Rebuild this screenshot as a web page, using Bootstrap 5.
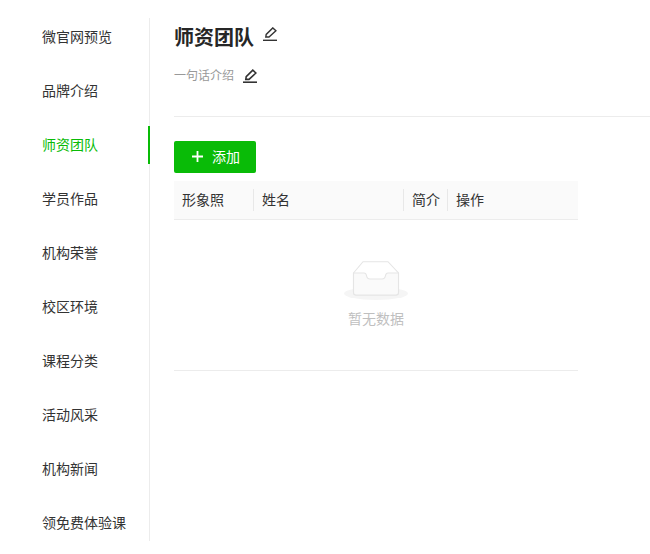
<!DOCTYPE html>
<html lang="zh">
<head>
<meta charset="utf-8">
<title>师资团队</title>
<link href="https://cdn.jsdelivr.net/npm/bootstrap@5.3.0/dist/css/bootstrap.min.css" rel="stylesheet">
<style>
html,body{height:100%;overflow:hidden}
body{background:#fff;color:#262626;font-family:"Noto Sans CJK SC","Liberation Sans",sans-serif;font-size:14px;line-height:1.5}
.page-wrap{padding-top:18px;width:650px}
.side-menu{width:150px;height:523px;border-right:1px solid #ececec;flex:none}
.side-item{display:flex;align-items:center;height:38px;margin-bottom:16px;padding-left:42px;padding-bottom:2px;color:#333;font-size:14px;text-decoration:none;margin-right:-1px}
.side-item.on{color:#09bb07;border-right:2px solid #09bb07}
.main-pane{padding-left:24px;flex:1;min-width:0}
.title-row{height:38px;gap:9px}
.title-txt{font-size:20px;font-weight:700;color:#262626;line-height:38px}
.title-pen{margin-bottom:6px}
.sub-row{height:38px;margin-top:1px;gap:9px;color:#999;font-size:12px}
.sub-txt{padding-bottom:2px}
.sep{height:1px;background:#ececec;margin-top:21px;margin-bottom:24px}
.add-btn{width:82px;height:32px;background:#09bb07;border:0;border-radius:2px;color:#fff;font-size:14px;padding:0 0 2px 2px;gap:9px}
.add-btn:hover{background:#09bb07;color:#fff}
.grid-head{width:404px;height:39px;margin-top:8px;background:#fafafa;border-bottom:1px solid #ececec;font-size:14px;color:#333}
.cell{height:100%;display:flex;align-items:center;padding-left:8px;padding-bottom:2px;position:relative}
.cell+.cell::before{content:"";position:absolute;left:-1px;top:8px;height:22px;width:1px;background:#e8e8e8}
.cw1{width:80px}.cw2{width:150px}.cw3{width:44px}.cw4{flex:1}
.empty-box{width:404px;height:151px;border-bottom:1px solid #ececec;padding-top:41px}
.empty-txt{color:#bfbfbf;font-size:14px;line-height:20px;margin-top:6px}
</style>
</head>
<body>
<div class="page-wrap d-flex">
  <nav class="side-menu">
    <a class="side-item" href="#">微官网预览</a>
    <a class="side-item" href="#">品牌介绍</a>
    <a class="side-item on" href="#">师资团队</a>
    <a class="side-item" href="#">学员作品</a>
    <a class="side-item" href="#">机构荣誉</a>
    <a class="side-item" href="#">校区环境</a>
    <a class="side-item" href="#">课程分类</a>
    <a class="side-item" href="#">活动风采</a>
    <a class="side-item" href="#">机构新闻</a>
    <a class="side-item" href="#">领免费体验课</a>
  </nav>
  <main class="main-pane">
    <div class="title-row d-flex align-items-center">
      <span class="title-txt">师资团队</span>
      <svg class="title-pen" width="14" height="14" viewBox="0 0 14 14" fill="none" stroke="#333" stroke-width="1.4"><path d="M2.8 10 L3.2 7.4 L9.8 0.9 L12.9 3.8 L6 10 Z"/><path d="M0 13.3H14"/></svg>
    </div>
    <div class="sub-row d-flex align-items-center">
      <span class="sub-txt">一句话介绍</span>
      <svg width="14" height="14" viewBox="0 0 14 14" fill="none" stroke="#333" stroke-width="1.6"><path d="M2.8 10.4 L3.2 7.6 L9.8 1.1 L12.9 4 L6 10.4 Z"/><path d="M0 13.2H14"/></svg>
    </div>
    <div class="sep"></div>
    <button type="button" class="btn add-btn d-flex align-items-center justify-content-center">
      <svg width="11" height="11" viewBox="0 0 11 11" fill="#fff"><path d="M4.6 0h1.8v4.6H11v1.8H6.4V11H4.6V6.4H0V4.6h4.6z"/></svg>
      <span>添加</span>
    </button>
    <div class="grid-head d-flex">
      <div class="cell cw1">形象照</div>
      <div class="cell cw2">姓名</div>
      <div class="cell cw3">简介</div>
      <div class="cell cw4">操作</div>
    </div>
    <div class="empty-box d-flex flex-column align-items-center">
      <svg width="64" height="41" viewBox="0 0 64 41">
        <ellipse cx="32" cy="32.5" rx="32" ry="6.5" fill="#f5f5f5"/>
        <path d="M9.5 12 L19 0.7 H44 L54.5 12 V31.5 Q54.5 34 52 34 H12 Q9.5 34 9.5 31.5 Z" fill="#fff" stroke="#e5e5e5" stroke-width="1.1"/>
        <path d="M9.5 12 H20 Q22 12 22.5 14.5 Q23 18 26 18 H38 Q41 18 41.5 14.5 Q42 12 44 12 H54.5 V31.5 Q54.5 34 52 34 H12 Q9.5 34 9.5 31.5 Z" fill="#fafafa" stroke="#e5e5e5" stroke-width="1.1"/>
      </svg>
      <div class="empty-txt">暂无数据</div>
    </div>
  </main>
</div>
<script src="https://cdn.jsdelivr.net/npm/bootstrap@5.3.0/dist/js/bootstrap.bundle.min.js"></script>
</body>
</html>
